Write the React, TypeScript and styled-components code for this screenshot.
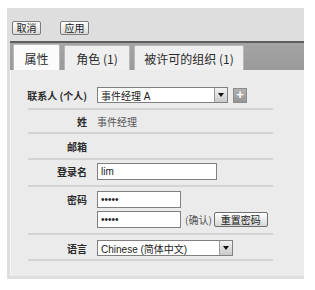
import React from 'react';
import styled, { createGlobalStyle } from 'styled-components';

const GlobalStyle = createGlobalStyle`
  html, body {
    margin: 0;
    padding: 0;
    background: #ffffff;
  }
  body {
    font-family: 'Liberation Sans', 'Noto Sans CJK SC', sans-serif;
  }
`;

const Frame = styled.div`
  margin: 8px 0 0 7px;
  width: 297px;
  height: 271px;
  background: #dedede;
  display: flex;
  flex-direction: column;
`;

const Toolbar = styled.div`
  height: 33px;
  box-sizing: border-box;
  padding: 13px 0 0 5px;
  display: flex;
  align-items: flex-start;
  gap: 19px;
`;

const SmallButton = styled.button<{ $w: number }>`
  width: ${(p) => p.$w}px;
  height: 14px;
  padding: 0;
  box-sizing: border-box;
  border: 1px solid #7c7c7c;
  border-radius: 2px;
  background: linear-gradient(#ffffff, #dadada);
  font-family: 'Noto Sans CJK SC', sans-serif;
  font-size: 10px;
  line-height: 12px;
  color: #222;
`;

const TabBar = styled.div`
  margin-left: 3px;
  height: 29px;
  box-sizing: border-box;
  border-top: 2px solid #5e5e5e;
  background: linear-gradient(#a4a4a4, #9a9a9a);
  padding-left: 3px;
  display: flex;
  align-items: flex-end;
  gap: 4px;
`;

const Tab = styled.div<{ $w: number; $active?: boolean }>`
  width: ${(p) => p.$w}px;
  height: ${(p) => (p.$active ? 26 : 25)}px;
  box-sizing: border-box;
  border: 1px solid #b9b9b9;
  border-bottom: none;
  border-radius: 2px 2px 0 0;
  background: ${(p) => (p.$active ? '#fbfbfb' : '#efefef')};
  display: flex;
  align-items: center;
  justify-content: center;
  font-family: 'Noto Sans CJK SC', sans-serif;
  font-size: 12px;
  color: #2a2a2a;
  padding-top: 1px;
`;

const Panel = styled.div`
  margin-left: 3px;
  height: 206px;
  box-sizing: border-box;
  background: #ebebec;
  border-left: 1px solid #f6f6f6;
  padding: 0 31px 0 17px;
`;

const Row = styled.div<{ $pt: number; $pb: number }>`
  display: grid;
  grid-template-columns: 59px 1fr;
  column-gap: 10px;
  align-items: start;
  padding: ${(p) => p.$pt}px 0 ${(p) => p.$pb}px;
  border-bottom: 2px solid #d3d3d3;
`;

const Label = styled.div<{ $h: number }>`
  height: ${(p) => p.$h}px;
  display: flex;
  align-items: center;
  justify-content: flex-end;
  font-family: 'Noto Sans CJK SC', sans-serif;
  font-size: 10px;
  font-weight: bold;
  color: #2a2a2a;
  white-space: nowrap;
`;

const Value = styled.div<{ $h: number }>`
  height: ${(p) => p.$h}px;
  display: flex;
  align-items: center;
  font-family: 'Noto Sans CJK SC', sans-serif;
  font-size: 10px;
  color: #555;
`;

const Line = styled.div`
  display: flex;
  align-items: center;
  gap: 4px;
`;

const Stack = styled.div`
  display: flex;
  flex-direction: column;
  gap: 3px;
`;

const TextInput = styled.input<{ $w: number }>`
  width: ${(p) => p.$w}px;
  height: 17px;
  box-sizing: border-box;
  border: 1px solid #808080;
  background: #fff;
  padding: 0 3px;
  margin: 0;
  font-family: 'Liberation Sans', sans-serif;
  font-size: 10px;
  color: #222;
  outline: none;
`;

const SelectBox = styled.div<{ $w: number }>`
  width: ${(p) => p.$w}px;
  height: 16px;
  box-sizing: border-box;
  border: 1px solid #808080;
  background: #fff;
  display: flex;
  align-items: stretch;
`;

const SelectText = styled.div`
  flex: 1;
  padding-left: 3px;
  display: flex;
  align-items: center;
  font-family: 'Liberation Sans', 'Noto Sans CJK SC', sans-serif;
  font-size: 10px;
  color: #222;
  white-space: nowrap;
  overflow: hidden;
`;

const Arrow = styled.div`
  width: 12px;
  border-left: 1px solid #9a9a9a;
  background: linear-gradient(#f2f2f2, #c9c9c9);
  display: flex;
  align-items: center;
  justify-content: center;
  &::after {
    content: '';
    border-left: 3px solid transparent;
    border-right: 3px solid transparent;
    border-top: 4px solid #111;
  }
`;

const PlusButton = styled.div`
  width: 14px;
  height: 15px;
  box-sizing: border-box;
  border: 1px solid #8c8c8c;
  background: linear-gradient(#b0b0b0, #969696);
  color: #fff;
  font-family: 'Liberation Sans', sans-serif;
  font-weight: bold;
  font-size: 13px;
  line-height: 12px;
  text-align: center;
  margin-left: 1px;
`;

const Hint = styled.span`
  font-family: 'Noto Sans CJK SC', sans-serif;
  font-size: 10px;
  color: #555;
  margin-right: -2px;
`;

const ResetButton = styled.button`
  width: 54px;
  height: 15px;
  padding: 0;
  box-sizing: border-box;
  border: 1px solid #6f6f6f;
  border-radius: 2px;
  background: linear-gradient(#ffffff, #d6d6d6);
  font-family: 'Noto Sans CJK SC', sans-serif;
  font-size: 10px;
  line-height: 12px;
  color: #222;
`;

const App = () => {
  return (
    <>
      <GlobalStyle />
      <Frame>
        <Toolbar>
          <SmallButton $w={29}>取消</SmallButton>
          <SmallButton $w={29}>应用</SmallButton>
        </Toolbar>
        <TabBar>
          <Tab $w={47} $active>属性</Tab>
          <Tab $w={66}>角色 (1)</Tab>
          <Tab $w={110}>被许可的组织 (1)</Tab>
        </TabBar>
        <Panel>
          <Row $pt={17} $pb={5}>
            <Label $h={16}>联系人 (个人)</Label>
            <Line>
              <SelectBox $w={131}>
                <SelectText>事件经理 A</SelectText>
                <Arrow />
              </SelectBox>
              <PlusButton>+</PlusButton>
            </Line>
          </Row>
          <Row $pt={4} $pb={4}>
            <Label $h={14}>姓</Label>
            <Value $h={14}>事件经理</Value>
          </Row>
          <Row $pt={5} $pb={5}>
            <Label $h={14}>邮箱</Label>
            <Value $h={14} />
          </Row>
          <Row $pt={3} $pb={5}>
            <Label $h={17}>登录名</Label>
            <TextInput $w={120} defaultValue="lim" />
          </Row>
          <Row $pt={4} $pb={5}>
            <Label $h={17}>密码</Label>
            <Stack>
              <TextInput $w={84} type="password" defaultValue="aaaaa" />
              <Line>
                <TextInput $w={84} type="password" defaultValue="aaaaa" />
                <Hint>(确认)</Hint>
                <ResetButton>重置密码</ResetButton>
              </Line>
            </Stack>
          </Row>
          <Row $pt={5} $pb={3}>
            <Label $h={16}>语言</Label>
            <SelectBox $w={136}>
              <SelectText>Chinese (简体中文)</SelectText>
              <Arrow />
            </SelectBox>
          </Row>
        </Panel>
      </Frame>
    </>
  );
};

export default App;
